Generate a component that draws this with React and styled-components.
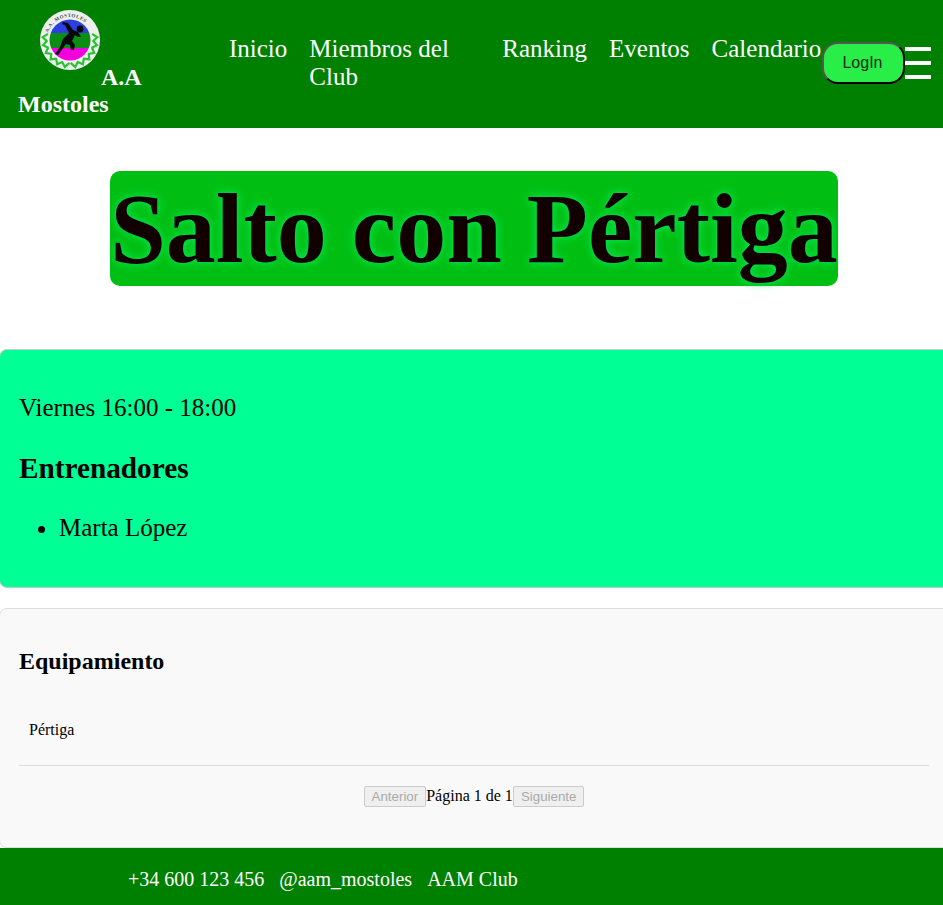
import styled, { createGlobalStyle } from "styled-components";

const GlobalStyle = createGlobalStyle`
  html, body {
    margin: 0;
    padding: 0;
    overflow-x: hidden;
    background: #fff;
    font-family: "Liberation Serif", "Times New Roman", serif;
  }
`;

// laurel leaves run up both sides of the badge ring
const laurelAngles = [11, 28, 45, 62, 79, 96];

function Laurel({ angle, side }) {
  return (
    <path
      d="M-3.8 -2.4 L0 2.4 L3.8 -2.4"
      fill="none"
      stroke="#2ac232"
      strokeWidth="2.2"
      transform={`rotate(${side * angle} 30 30) translate(30 55)`}
    />
  );
}

function ClubLogo() {
  return (
    <LogoImage viewBox="0 0 60 60" aria-hidden="true">
      <defs>
        <clipPath id="logoInner">
          <circle cx="30" cy="30" r="20.5" />
        </clipPath>
        <path id="logoArc" d="M7 30 A23 23 0 0 1 53 30" />
      </defs>
      <circle cx="30" cy="30" r="30" fill="#eef0ee" />
      <g clipPath="url(#logoInner)">
        <rect x="0" y="8" width="60" height="15" fill="#2b3fe2" />
        <rect x="0" y="23" width="60" height="15" fill="#0a8f14" />
        <rect x="0" y="38" width="60" height="15" fill="#f200dc" />
      </g>
      {laurelAngles.map((a) => (
        <g key={a}>
          <Laurel angle={a} side={1} />
          <Laurel angle={a} side={-1} />
        </g>
      ))}
      <circle cx="40" cy="19" r="3.4" fill="#080808" />
      <path
        d="M15 44 L20 37 L23 29 L29 23 L25 15 L22 14 L23 12 L28 13 L33 20 L38 22 L41 27 L38 27 L35 25 L32 31 L35 35 L34 40 L31 40 L30 35 L26 34 L18 45 Z"
        fill="#080808"
      />
      <text fontFamily="'Liberation Serif', serif" fontSize="5" fontWeight="700" letterSpacing="0.5" fill="#3a4a50">
        <textPath href="#logoArc" startOffset="10%">A.A. MOSTOLES</textPath>
      </text>
    </LogoImage>
  );
}

export default function App() {
  return (
    <Page>
      <GlobalStyle />
      <Header>
        <Brand>
          <ClubLogo />
          A.A Mostoles
        </Brand>
        <Nav>
          <NavItem>Inicio</NavItem>
          <NavItem $wide>Miembros del Club</NavItem>
          <NavItem>Ranking</NavItem>
          <NavItem>Eventos</NavItem>
          <NavItem>Calendario</NavItem>
        </Nav>
        <LoginButton>LogIn</LoginButton>
        <Burger aria-hidden="true">
          <span />
          <span />
          <span />
        </Burger>
      </Header>

      <TitleRow>
        <Title>Salto con Pértiga</Title>
      </TitleRow>

      <SchedulePanel>
        <ScheduleText>Viernes 16:00 - 18:00</ScheduleText>
        <SectionHeading>Entrenadores</SectionHeading>
        <TrainerList>
          <li>Marta López</li>
        </TrainerList>
      </SchedulePanel>

      <EquipmentPanel>
        <EquipmentHeading>Equipamiento</EquipmentHeading>
        <EquipmentRow>Pértiga</EquipmentRow>
        <Pagination>
          <PageButton disabled>Anterior</PageButton>
          <PageLabel>Página 1 de 1</PageLabel>
          <PageButton disabled>Siguiente</PageButton>
        </Pagination>
      </EquipmentPanel>

      <Footer>
        <span>+34 600 123 456</span>
        <span>@aam_mostoles</span>
        <span>AAM Club</span>
      </Footer>
    </Page>
  );
}

const Page = styled.div`
  width: 943px;
  overflow: hidden;
`;

const Header = styled.header`
  display: flex;
  align-items: flex-start;
  height: 128px;
  background: #008000;
  color: #fff;
`;

const Brand = styled.div`
  width: 160px;
  padding: 10px 0 0 18px;
  flex-shrink: 0;
  font-size: 24px;
  font-weight: 700;
  line-height: 27px;
`;

const LogoImage = styled.svg`
  width: 60px;
  height: 60px;
  margin-left: 22px;
  margin-right: 1px;
  vertical-align: 15px;
`;

const Nav = styled.nav`
  display: flex;
  align-items: flex-start;
  gap: 22px;
  width: 593px;
  margin-left: 51px;
  padding-top: 35px;
  font-size: 25px;
  line-height: 28px;
`;

const NavItem = styled.div`
  flex-shrink: 0;
  width: ${(p) => (p.$wide ? "171px" : "auto")};
`;

const LoginButton = styled.button`
  flex-shrink: 0;
  width: 83px;
  height: 42px;
  margin-top: 42px;
  padding: 0 2px 0 0;
  background: #28ee47;
  border: 2px solid;
  border-color: #555 #000 #000 #555;
  border-radius: 16px;
  color: #0b2a12;
  font-family: "Liberation Sans", Arial, sans-serif;
  font-size: 16px;
`;

const Burger = styled.div`
  display: flex;
  flex-direction: column;
  gap: 10px;
  width: 26px;
  margin-top: 47px;
  span {
    display: block;
    height: 4px;
    background: #fff;
  }
`;

const TitleRow = styled.div`
  display: flex;
  justify-content: center;
  padding: 43px 0 63px 5px;
`;

const Title = styled.h1`
  margin: 0;
  padding: 0 0.5px;
  background: #00bf13;
  border-radius: 10px;
  color: #120000;
  font-size: 100px;
  line-height: 115px;
  font-weight: 700;
  text-shadow: 0 0 8px #00f060;
`;

const SchedulePanel = styled.section`
  box-sizing: border-box;
  width: 963px;
  height: 239px;
  margin-left: -1px;
  padding: 28px 19px 0;
  background: #00ff95;
  border: 1px solid #ccc;
  border-radius: 8px;
`;

const ScheduleText = styled.p`
  margin: 16px 0 0;
  font-size: 25px;
  line-height: 28px;
`;

const SectionHeading = styled.h2`
  margin: 30px 0 0;
  font-size: 29.25px;
  line-height: 32px;
`;

const TrainerList = styled.ul`
  margin: 30px 0 0;
  padding-left: 40px;
  font-size: 25px;
  line-height: 28px;
`;

const EquipmentPanel = styled.section`
  box-sizing: border-box;
  width: 963px;
  height: 240px;
  margin: 20px 0 0 -1px;
  padding: 0 33px 0 19px;
  background: #f9f9f9;
  border: 1px solid #ddd;
  border-radius: 8px;
`;

const EquipmentHeading = styled.h3`
  margin: 39px 0 0;
  font-size: 24px;
  line-height: 27px;
`;

const EquipmentRow = styled.div`
  box-sizing: border-box;
  height: 91px;
  width: 910px;
  padding: 46px 10px 0;
  border-bottom: 1px solid #ddd;
  font-size: 16px;
  line-height: 18px;
`;

const Pagination = styled.div`
  display: flex;
  justify-content: center;
  align-items: center;
  width: 910px;
  margin-top: 20px;
  font-size: 16px;
`;

const PageLabel = styled.span`
  margin-bottom: 2px;
`;

const PageButton = styled.button`
  height: 21px;
  padding: 1px 7px;
  background: #efefef;
  border: 1px solid #ccc;
  border-radius: 2px;
  color: #aaa;
  font-family: "Liberation Sans", Arial, sans-serif;
  font-size: 13.33px;
`;

const Footer = styled.footer`
  box-sizing: border-box;
  display: flex;
  align-items: center;
  gap: 15px;
  height: 57px;
  padding: 6px 0 0 128px;
  background: #008000;
  color: #fff;
  font-size: 20px;
`;
